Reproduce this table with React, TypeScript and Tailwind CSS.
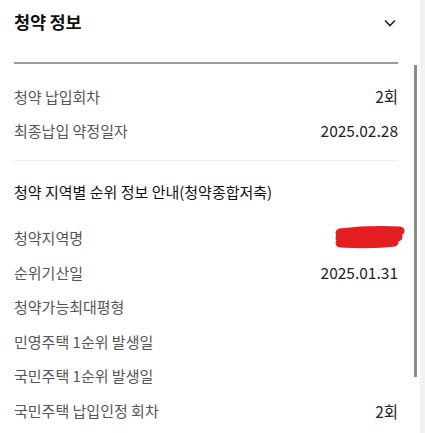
import React from 'react';

const topRows = [
    { label: '청약 납입회차', value: '2회' },
    { label: '최종납입 약정일자', value: '2025.02.28' },
];

const regionRows = [
    { label: '청약지역명', value: 'hidden' },
    { label: '순위기산일', value: '2025.01.31' },
    { label: '청약가능최대평형', value: '' },
    { label: '민영주택 1순위 발생일', value: '' },
    { label: '국민주택 1순위 발생일', value: '' },
    { label: '국민주택 납입인정 회차', value: '2회' },
];

const Redacted: React.FC = () => (
    <svg width="72" height="24" viewBox="0 0 72 24" className="mr-[-8px]">
        <path d="M6 7 C22 5, 45 4, 66 5 M6 12 C25 11, 45 10, 64 11 M6 17 C25 18, 45 18, 60 16" stroke="#e41e1e" strokeWidth="9" strokeLinecap="round" fill="none" />
    </svg>
);

const Row: React.FC<{ label: string; value: string; h: string }> = ({ label, value, h }) => (
    <div className={`flex items-center justify-between ${h}`}>
        <span className="text-[15px] text-[#555555]">{label}</span>
        {value === 'hidden' ? <Redacted /> : <span className="text-[15.5px] text-[#222222]">{value}</span>}
    </div>
);

const App: React.FC = () => {
    return (
        <div className="relative w-[425px] h-[433px] overflow-hidden bg-white" style={{ fontFamily: '"Noto Sans CJK KR", "Noto Sans", sans-serif' }}>
            <div className="pl-[14px] pr-[27px]">
                <div className="flex items-center justify-between h-[44px]">
                    <h2 className="text-[17.5px] font-bold text-[#111111] tracking-[-0.2px]">청약 정보</h2>
                    <svg width="12" height="8" viewBox="0 0 12 8" className="mr-[2px] mt-[1px]">
                        <path d="M1 1.5 L6 6.5 L11 1.5" stroke="#222" strokeWidth="1.6" fill="none" />
                    </svg>
                </div>
                <div className="mt-[18px] h-[2px] bg-[#9a9a9a]" />
                <div className="mt-[16px]">
                    {topRows.map(r => <Row key={r.label} label={r.label} value={r.value} h="h-[34px]" />)}
                </div>
                <div className="mt-[12px] h-px bg-[#eeeeee]" />
                <div className="mt-[14px] h-[34px] flex items-center">
                    <span className="text-[15px] text-[#111111]">청약 지역별 순위 정보 안내(청약종합저축)</span>
                </div>
                <div className="mt-[12px]">
                    {regionRows.map(r => <Row key={r.label} label={r.label} value={r.value} h="h-[34.6px]" />)}
                </div>
            </div>
            <div className="absolute right-0 top-0 w-[5px] h-full bg-[#f3f3f3]" />
            <div className="absolute left-[414px] top-[65px] w-[3px] h-[312px] bg-[#8a8a8a]" />
        </div>
    );
};

export default App;
